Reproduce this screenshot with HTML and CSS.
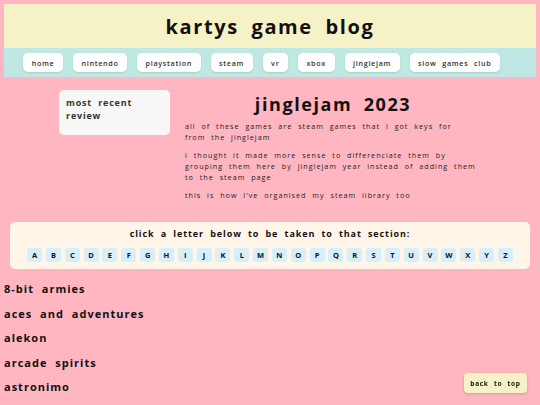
FILE: index.html
```html
<!DOCTYPE html>
<html>
<head>
<meta charset="utf-8">
<link rel="stylesheet" href="styles.css">
</head>
<body>
<header class="site-header">
  <h1 class="site-title">kartys game blog</h1>
</header>
<nav class="site-nav">
  <a class="nav-btn" href="#">home</a>
  <a class="nav-btn" href="#">nintendo</a>
  <a class="nav-btn" href="#">playstation</a>
  <a class="nav-btn" href="#">steam</a>
  <a class="nav-btn" href="#">vr</a>
  <a class="nav-btn" href="#">xbox</a>
  <a class="nav-btn" href="#">jinglejam</a>
  <a class="nav-btn" href="#">slow games club</a>
</nav>
<section class="intro">
  <aside class="recent-card">most recent review</aside>
  <div class="intro-main">
    <h2 class="page-title">jinglejam 2023</h2>
    <p class="intro-text">all of these games are steam games that i got keys for<br>from the jinglejam</p>
    <p class="intro-text">i thought it made more sense to differenciate them by<br>grouping them here by jinglejam year instead of adding them<br>to the steam page</p>
    <p class="intro-text">this is how i've organised my steam library too</p>
  </div>
</section>
<section class="letters">
  <div class="letters-label">click a letter below to be taken to that section:</div>
  <div class="letters-row">
    <a class="letter" href="#">A</a><a class="letter" href="#">B</a><a class="letter" href="#">C</a><a class="letter" href="#">D</a><a class="letter" href="#">E</a><a class="letter" href="#">F</a><a class="letter" href="#">G</a><a class="letter" href="#">H</a><a class="letter" href="#">I</a><a class="letter" href="#">J</a><a class="letter" href="#">K</a><a class="letter" href="#">L</a><a class="letter" href="#">M</a><a class="letter" href="#">N</a><a class="letter" href="#">O</a><a class="letter" href="#">P</a><a class="letter" href="#">Q</a><a class="letter" href="#">R</a><a class="letter" href="#">S</a><a class="letter" href="#">T</a><a class="letter" href="#">U</a><a class="letter" href="#">V</a><a class="letter" href="#">W</a><a class="letter" href="#">X</a><a class="letter" href="#">Y</a><a class="letter" href="#">Z</a>
  </div>
</section>
<ul class="games">
  <li class="game">8-bit armies</li>
  <li class="game">aces and adventures</li>
  <li class="game">alekon</li>
  <li class="game">arcade spirits</li>
  <li class="game">astronimo</li>
</ul>
<a class="back-top" href="#">back to top</a>
</body>
</html>
```

FILE: styles.css
```css
html, body {
  margin: 0;
  padding: 0;
}
body {
  background: #ffb6c1;
  padding: 4px;
  font-family: "Open Sans", "DejaVu Sans", sans-serif;
  color: #111;
  overflow: hidden;
  height: 405px;
  box-sizing: border-box;
}
a { color: inherit; text-decoration: none; }

.site-header {
  background: #f6f2c8;
  height: 44px;
  display: flex;
  align-items: center;
  justify-content: center;
}
.site-title {
  margin: 0;
  font-size: 20px;
  font-weight: 700;
  letter-spacing: 1.6px;
  word-spacing: 6px;
  line-height: 1;
  padding-top: 1px;
}

.site-nav {
  background: #bfe8e4;
  height: 29px;
  display: flex;
  align-items: center;
  justify-content: center;
  gap: 10px;
  padding-right: 17px;
}
.nav-btn {
  background: #fff;
  border-radius: 5px;
  height: 19px;
  display: flex;
  align-items: center;
  padding: 0 8.5px;
  font-size: 7.2px;
  font-weight: 600;
  letter-spacing: 0.7px;
  word-spacing: 3px;
  color: #333;
  box-shadow: 0 1px 2px rgba(0,0,0,0.12);
}

.intro {
  display: flex;
  align-items: flex-start;
  padding: 13px 0 0 55px;
  gap: 15px;
  height: 131px;
  box-sizing: border-box;
}
.recent-card {
  width: 111px;
  height: 45px;
  box-sizing: border-box;
  background: #f7f7f7;
  border-radius: 5px;
  padding: 6px 7px;
  font-size: 9px;
  font-weight: 700;
  letter-spacing: 0.8px;
  word-spacing: 3px;
  line-height: 13px;
  color: #333;
}
.intro-main {
  width: 296px;
}
.page-title {
  margin: 3px 0 6px;
  text-align: center;
  font-size: 18px;
  font-weight: 700;
  letter-spacing: 1.6px;
  word-spacing: 5px;
  line-height: 22px;
}
.intro-text {
  margin: 0 0 7px;
  font-size: 7.2px;
  letter-spacing: 1px;
  word-spacing: 3px;
  line-height: 11px;
  color: #222;
  white-space: nowrap;
}

.letters {
  margin: 14px 6px 0;
  background: #fff6e9;
  border-radius: 5px;
  height: 47px;
  padding-top: 6px;
  box-sizing: border-box;
}
.letters-label {
  text-align: center;
  font-size: 9px;
  font-weight: 700;
  letter-spacing: 0.9px;
  word-spacing: 3px;
  line-height: 12px;
}
.letters-row {
  display: flex;
  justify-content: center;
  gap: 3.84px;
  margin-top: 8px;
}
.letter {
  width: 15px;
  height: 14px;
  background: #d6effa;
  border-radius: 3px;
  display: flex;
  align-items: center;
  justify-content: center;
  font-size: 7.5px;
  font-weight: 700;
}

.games {
  list-style: none;
  margin: 13px 0 0;
  padding: 0;
}
.game {
  font-size: 11px;
  font-weight: 700;
  letter-spacing: 1px;
  word-spacing: 4px;
  line-height: 14px;
  margin-bottom: 10.5px;
}

.back-top {
  position: fixed;
  left: 464px;
  top: 373px;
  width: 63px;
  height: 20px;
  background: #f6f2c8;
  border-radius: 4px;
  display: flex;
  align-items: center;
  justify-content: center;
  font-size: 6.5px;
  font-weight: 700;
  letter-spacing: 0.7px;
  word-spacing: 3px;
  box-shadow: 0 1px 3px rgba(0,0,0,0.18);
}
```
